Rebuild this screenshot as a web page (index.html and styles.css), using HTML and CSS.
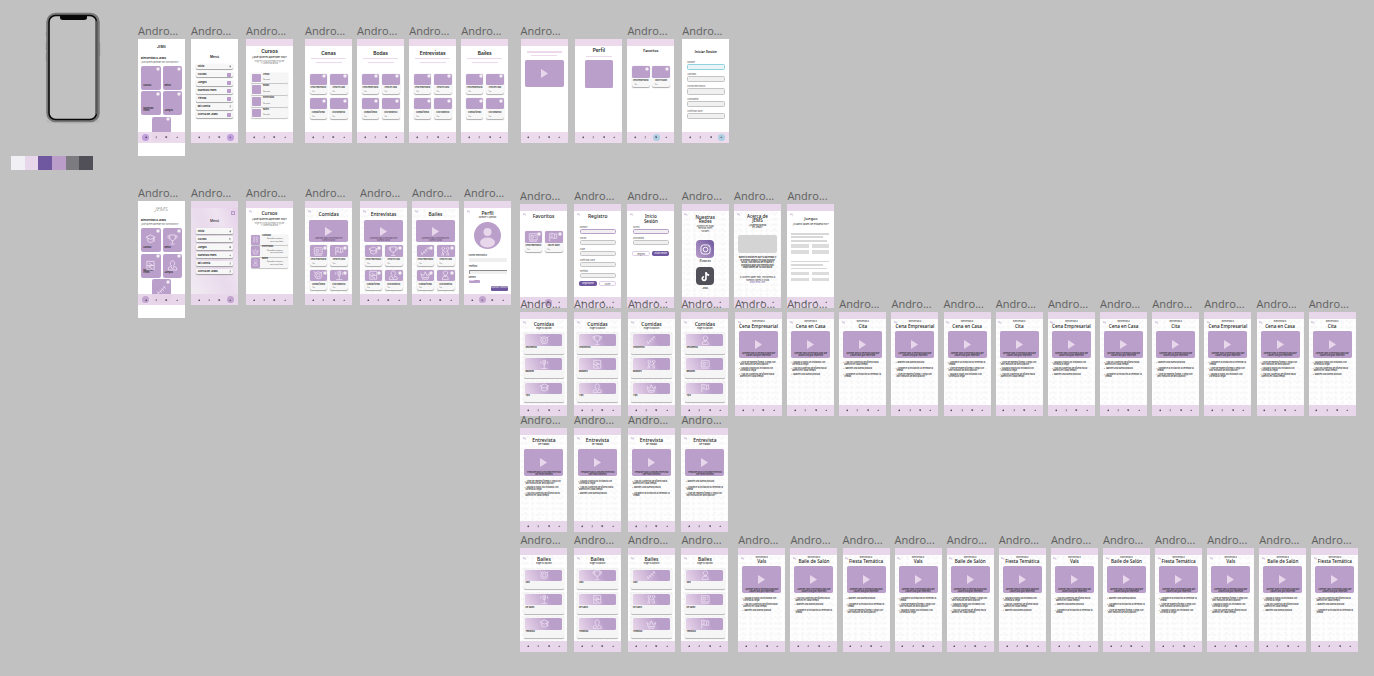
FILE: index.html
```html
<!DOCTYPE html>
<html lang="es">
<head>
<meta charset="utf-8">
<title>JEMS</title>
<link rel="stylesheet" href="styles.css">
</head>
<body>
<svg class="defs" aria-hidden="true">
  <symbol id="home" viewBox="0 0 12 12"><path d="M1 6 6 1l5 5H9.500v5h-7V6z"/></symbol>
  <symbol id="user" viewBox="0 0 12 12"><circle cx="6" cy="3.500" r="2.500"/><path d="M1.500 11c0-5 9-5 9 0z"/></symbol>
  <symbol id="heart" viewBox="0 0 12 12"><path d="M6 11 1 5.500C0 2 4 0 6 3c2-3 6-1 5 2.500z"/></symbol>
  <symbol id="more" viewBox="0 0 12 12"><path d="M1 5h10v2H1zM5 2h2v8H5z"/></symbol>
  <symbol id="play" viewBox="0 0 7 9"><path d="M0 0 7 4.500 0 9z"/></symbol>
  <symbol id="back" viewBox="0 0 12 12"><path d="M5 1 1 4l4 3M1 4h6c5 0 5 6 1 7" fill="none" stroke="currentColor" stroke-width="1.500"/></symbol>
</svg>
<main class="canvas" id="canvas">
  <svg class="phone" viewBox="0 0 60 120">
    <ellipse cx="30" cy="109" rx="27" ry="3" fill="#aaa" opacity=".4"/>
    <rect x="4.500" y="2" width="51" height="107" rx="8" fill="#c1c1c1" stroke="#77777a" stroke-width="2.500"/>
    <rect x="6" y="3.500" width="47.500" height="104" rx="6.500" fill="none" stroke="#080808" stroke-width="1.600"/>
    <path d="M53.300 9v93" stroke="#555" stroke-width="1.600"/>
    <path d="M17 3.500h27v2q0 2.500-3 2.500H20q-3 0-3-2.500z" fill="#080808"/>
    <path d="M3.300 20v4M3.300 30v8M3.300 41v8M56.700 31v13" stroke="#777" stroke-width=".6"/>
  </svg>
  <div class="palette"><i class="p1"></i><i class="p2"></i><i class="p3"></i><i class="p4"></i><i class="p5"></i><i class="p6"></i></div>
</main>
<script src="app.js"></script>
</body>
</html>
```
FILE: styles.css
```css
* { box-sizing: border-box; }
body { margin: 0; background: #c1c1c1; font-family: Inter, "Open Sans", sans-serif; color: #222; }
.defs { position: absolute; width: 0; height: 0; }
.canvas { position: relative; width: 1374px; height: 676px; overflow: hidden; }
.phone { position: absolute; left: 43px; top: 12px; width: 60px; height: 120px; }
.palette { position: absolute; left: 11px; top: 156px; width: 82px; height: 14px; display: grid; grid-template-columns: repeat(6, 1fr); }
.p1 { background: #f1f1f5; } .p2 { background: #e8d6ea; } .p3 { background: #6f589f; }
.p4 { background: #bb9dca; } .p5 { background: #7c7b80; } .p6 { background: #514f57; }

.board { position: absolute; width: 47px; }
.name { position: absolute; left: 0; top: -16px; font: 11px/16px "Open Sans", sans-serif; color: #606060; white-space: nowrap; }
.sheet { height: 104px; background: #fff; }
.tall .sheet { height: 117px; }
.screen { position: relative; height: 104px; overflow: hidden; display: flex; flex-direction: column; align-items: center; --bar: #ecdaec; }
.v2 .screen { --bar: #e8d6ea; }
.textured .screen { background: radial-gradient(circle, #f8f8f9 1px, transparent 1.600px) 0 0 / 5px 6px, radial-gradient(circle, #f8f8f9 1px, transparent 2px) 2px 3px / 7px 5px, #fefefe; }
.soft .screen { background: linear-gradient(70deg, #f2edf3, #e9daec 50%, #efe3f1 70%, #e4cee8); }
.bar { flex: none; width: 100%; height: 7px; background: var(--bar); }
.bar.none { background: none; }
.nav { position: absolute; left: 0; right: 0; bottom: 0; height: 11px; padding: 0 2.800px; display: grid; grid-template-columns: repeat(4, 1fr); place-items: center; background: var(--bar); color: #55485e; opacity: .96; }
.nav span { width: 7px; height: 7px; border-radius: 50%; display: grid; place-items: center; }
.nav svg { width: 2.500px; height: 2.500px; fill: currentColor; }
.nav .on { background: #bd9bdc; }
.v2 .nav .on { background: #c0a2cd; }
.cyan .nav .on { background: #a9cde0; }
.back { position: absolute; left: 2.500px; top: 9px; width: 3.500px; height: 3.500px; color: #b493c6; }

.head { flex: none; width: 100%; display: flex; flex-direction: column; align-items: center; text-align: center; }
.title { font-size: 4.800px; line-height: 5px; font-weight: 600; white-space: nowrap; }
.v2 .title { font-family: "Noto Sans", sans-serif; font-weight: 500; font-size: 4.900px; }
.v2 .title.two { line-height: 4.300px; font-size: 4.500px; }
.title.small { font-size: 3.400px; }
.sub { font-size: 2.200px; line-height: 2.600px; font-weight: 500; white-space: nowrap; }
.quiet { font-size: 2px; line-height: 2.200px; color: #777; white-space: nowrap; }
.rule { width: 35px; height: 1.500px; background: #ecd9ec; margin-top: 2px; }
.rule.short { width: 26px; height: 1.200px; margin-top: 2.500px; }

.h-home { height: 27px; padding-top: 0; }
.h-home .title { font-size: 3.200px; line-height: 3px; }
.v2 .h-home .title { font-style: italic; font-weight: 300; color: #777; font-size: 6px; }
.h-home .sub { align-self: flex-start; margin: 7.500px 0 0 3px; font-size: 2.700px; line-height: 3.500px; font-weight: 700; }
.h-home .quiet { align-self: flex-start; margin: .8px 0 0 3px; color: #555; font-size: 1.900px; }
.tiles { flex: none; width: 40.500px; display: flex; flex-wrap: wrap; justify-content: center; gap: 1.300px 2px; margin-top: -7px; }
.tile { width: 19.200px; height: 24px; border-radius: 2px; background: #bb9fcb; position: relative; display: flex; align-items: flex-end; padding: 0 2px 3px; font-size: 2.300px; line-height: 2.300px; font-weight: 600; }
.tile .art { position: absolute; left: 4px; top: 6px; width: 11px; height: 11px; }
.dot { position: absolute; right: .8px; top: .8px; width: 4px; height: 4px; border-radius: 50%; background: #fff; border: .8px solid #d9cbdf; }
.art { fill: none; stroke: #efe3f3; stroke-width: 1.700; }

.h-menu { height: 17.500px; padding-top: 9px; }
.v2 .h-menu { height: 20px; padding-top: 11px; }
.h-menu .title, .v2 .h-menu .title { font-size: 3.300px; line-height: 4px; }
.menu { width: 36.500px; display: grid; gap: 2.100px; }
.menu div { height: 5.950px; border-radius: 1.300px; background: #f7f7f8; box-shadow: 0 .8px 1px #888; padding: 0 1.500px; display: flex; align-items: center; justify-content: space-between; font-size: 2.500px; font-weight: 700; white-space: nowrap; line-height: 3px; }
.menu i { width: 4px; height: 4px; background: #bb9fcb; }
.menu svg { width: 2.600px; height: 2.600px; fill: #888; }
.corner { position: absolute; right: 3.500px; top: 9.500px; width: 4px; height: 4px; border: 1px solid #b99bc9; background: #dfc9e4; }

.h-course { height: 26.500px; padding-top: 3px; }
.h-course .sub { margin-top: 2px; font-size: 2.600px; }
.h-course .quiet { margin-top: 1px; }
.courses { width: 36.500px; display: grid; gap: 1px; }
.course { height: 10.700px; border-radius: 1.500px; background: #f6f6f6; box-shadow: 0 .5px 1px #c4c4c4; display: flex; gap: 2px; padding: 1px; font-size: 2.100px; line-height: 2.600px; font-weight: 600; white-space: nowrap; }
.course .thumb { flex: none; width: 8.700px; height: 8.700px; border-radius: 1px; background: #bb9fcb; }
.v2 .course { padding: 0 1px 0 0; height: 10.500px; gap: 2px; }
.v2 .course .thumb { height: 10px; display: grid; place-items: center; }
.course .art { width: 7px; height: 7px; }
.course small { display: block; font-size: 1.800px; line-height: 2.200px; font-weight: 400; color: #555; }
.v2 .course small { padding-left: 5px; text-align: right; }

.h-cards { height: 27.500px; padding-top: 4.500px; }
.v2 .h-cards { height: 12px; padding-top: 3.500px; }
.h-fav { height: 20px; padding-top: 3px; }
.cards { width: 38px; display: grid; grid-template-columns: 17.700px 17.700px; justify-content: space-between; gap: 3.700px 0; }
.card { position: relative; height: 20.700px; border-radius: 2px; background: #f7f7f7; box-shadow: 0 .5px 1px #aaa; font-size: 1.850px; line-height: 2.400px; font-weight: 600; text-align: center; white-space: nowrap; }
.pic { height: 11.500px; margin-bottom: 1.300px; border-radius: 1.500px; background: #bb9fcb; display: grid; place-items: center; }
.pic .art { width: 10.500px; height: 10.500px; }
.card small { display: block; text-align: left; padding: 1.500px 0 0 2.500px; font-size: 1.800px; font-weight: 400; color: #777; }

.video { flex: none; position: relative; width: 39px; height: 27px; border-radius: 1.800px; background: #bb9fcb; display: grid; place-items: center; }
.video svg { width: 7px; height: 9px; fill: #e8d6ea; }
.video p { position: absolute; left: 1px; right: 1px; bottom: 1px; margin: 0; font-size: 1.950px; line-height: 2.100px; font-weight: 500; text-align: center; white-space: nowrap; }
.video.low { height: 22px; margin-bottom: 3px; }
.video.low p { color: #5f4b69; }
.h-video { height: 14px; padding-top: 3px; }
.h-perfil { height: 14px; padding-top: 2px; }
.square { width: 27.500px; height: 27.500px; border-radius: 1.500px; background: #bb9fcb; }

.h-form { height: 15px; padding-top: 3.500px; }
.h-sign { height: 15px; padding-top: 3px; }
.v2 .h-sign .two { line-height: 4.600px; }
.fields { width: 38px; display: grid; gap: 3px; }
.field { font-size: 2px; line-height: 3px; font-weight: 500; color: #666; padding-left: .5px; }
.field i { display: block; height: 6.200px; border: .6px solid #c4c4c4; border-radius: 1.500px; background: #f0f0f0; }
.field.first i { border: 1px solid #8fd3de; background: #eaf3f5; }
.v2 .field i { height: 5px; }
.v2 .fields { width: 37px; gap: 3px; }
.v2 .field.first i { border: .8px solid #bb9fcb; background: #f0f0f0; }
.actions { width: 37px; margin-top: 3px; display: flex; justify-content: space-between; }
.btn { width: 17.500px; height: 5px; border-radius: 1.800px; background: #6f589f; color: #fff; font-size: 2px; line-height: 5px; text-align: center; white-space: nowrap; }
.btn.line { background: #fff; color: #444; border: .5px solid #dccfe6; line-height: 4px; }
.login { margin-top: 6px; }

.h-me { height: 14px; padding-top: 3px; }
.h-me .sub { font-size: 2px; font-weight: 400; }
.avatar { flex: none; width: 27px; height: 27px; fill: #e8d6ea; }
.me { width: 38px; display: flex; flex-direction: column; font-size: 2.100px; line-height: 2.500px; font-weight: 500; padding-top: 5.500px; }
.me i { height: 4.200px; margin: .8px 0 4px; background: #efefef; }
.me i.live { border-top: 1px solid #888; border-left: 1px solid #999; margin-bottom: 3.500px; }
.chip { width: 11px; height: 3.300px; background: #bb9fcb; border-radius: .8px; color: #fff; }
.save { align-self: flex-end; width: 17px; height: 4.500px; margin: 3px -1.500px 0 0; background: #6f589f; border-radius: 1px; color: #ddd; line-height: 4.500px; text-align: center; }

.h-net { height: 29px; padding-top: 4px; }
.h-net .quiet { margin-top: 1.500px; color: #333; }
.app { width: 18px; height: 18px; border-radius: 4px; background: linear-gradient(45deg, #bb9fcb, #6f589f); display: grid; place-items: center; }
.app.dark { background: #514f57; }
.app svg { width: 11px; height: 11px; fill: none; stroke: #fff; stroke-width: 2; }
.handle { height: 9px; font-size: 2.100px; line-height: 8px; font-weight: 500; }

.h-about { height: 24px; padding-top: 3px; }
.h-about .sub { margin-top: 2px; }
.photo { flex: none; width: 39.500px; height: 18px; border-radius: 2px; background: #d4d4d4; }
.para { width: 38px; margin-top: 4px; font-size: 2.150px; line-height: 2.600px; font-weight: 600; text-align: center; }
.para.thin { margin-top: 7px; font-weight: 400; }
.link { color: #6f589f; }

.h-quiz { height: 22px; padding-top: 4.500px; }
.v2 .h-quiz .title { font-size: 4.200px; }
.h-quiz .sub { margin-top: 3px; font-weight: 400; font-size: 2.400px; }
.quiz { width: 39px; display: flex; flex-wrap: wrap; gap: 1.800px 3px; margin-bottom: 7px; }
.quiz i { height: 1.700px; background: #d8d8d8; width: 37.500px; }
.quiz .m { width: 31.500px; } .quiz .l { width: 36px; }
.quiz b { width: 17.500px; height: 3.200px; background: #dcdcdc; margin-top: 1px; }

.h-list { height: 14px; padding-top: 2.500px; }
.h-list .sub { line-height: 3px; }
.list { display: grid; gap: 3.700px; }
.item { width: 40.300px; height: 20.600px; padding: 1px 1.700px; border-radius: 1.300px; background: #f5f5f5; box-shadow: 0 .6px 1px #b4b4b4; font-size: 2.100px; line-height: 2.500px; font-weight: 600; }
.item .pic { background: linear-gradient(65deg, #e6d3e9 5%, #bb9fcb 65%); }

.h-detail { height: 11.500px; padding-top: 1.300px; }
.h-detail .quiet { color: #444; font-weight: 500; line-height: 2.500px; }
.v2 .h-detail .title { font-size: 4.650px; line-height: 6px; }
.steps { align-self: stretch; margin: 4.500px 3px 0 5px; padding: 0; list-style: none; font-size: 2.100px; line-height: 2.400px; font-weight: 500; display: grid; gap: 1px; }
.steps li { height: 5px; }
.steps li::before { content: "•"; margin: 0 1px 0 -1px; }
```
FILE: app.js
```javascript
const ART = [
  'M12 2 2 7l10 5 10-5zM6 9v7c4 3 8 3 12 0V9M20 8v9',
  'M6 2h12v7c0 7-12 7-12 0zM6 4H2c0 5 2 6 5 6M18 4h4c0 5-2 6-5 6M12 14v6M7 22h10',
  'M4 3h16v18H4zM8 7l8 4-8 4 8 4M4 12h16',
  'M12 2c6 0 6 9 2 11l7 4v5H3v-5l7-4C6 11 6 2 12 2zM9 15l3 5 3-5',
  'M3 21 20 3M8 12l5 5M12 8l5 5M6 20l-3-6M21 8l-5-5',
  'M7 3a3 3 0 1 0 1 0M17 3a3 3 0 1 0 1 0M4 22l3-12 5 5 5-5 3 12M8 22v-6M16 22v-6',
  'M2 8l4 13h12l4-13-6 5-4-9-4 9zM6 17h12',
  'M12 2a5 5 0 1 0 1 0M5 22c0-12 14-12 14 0zM9 12l3 4 3-4',
  'M3 4h18v14H3zM7 8h5v6H7zM15 8h3M15 12h3M3 21h18',
  'M4 3v18M4 4c6-4 10 4 16 0v10c-6 4-10-4-16 0M9 5v9M15 5v9',
  'M4 12a8 8 0 1 0 16 0 8 8 0 1 0-16 0M8 12a4 4 0 1 0 8 0 4 4 0 1 0-8 0M2 3l4 4M22 3l-4 4',
  'M9 2v8a3 3 0 0 0 6 0V2M12 2v20M5 22h14M4 5v6M20 5v6'
];
let artIndex = 0;
const art = () => `<svg class="art" viewBox="0 0 24 24"><path d="${ART[artIndex++ % ART.length]}"/></svg>`;
const icon = id => `<svg><use href="#${id}"/></svg>`;
const bar = '<div class="bar"></div>';
const noBar = '<div class="bar none"></div>';
const back = '<svg class="back"><use href="#back"/></svg>';
const nav = on => `<div class="nav">${['home', 'user', 'heart', 'more'].map((n, i) => `<span${i === on ? ' class="on"' : ''}>${icon(n)}</span>`).join('')}</div>`;
const head = (cls, html) => `<div class="head ${cls}">${html}</div>`;
const title = (t, c = '') => `<div class="title ${c}">${t}</div>`;
const sub = t => `<div class="sub">${t}</div>`;
const quiet = t => `<div class="quiet">${t}</div>`;
const video = (text = '', cls = '') => `<div class="video ${cls}">${icon('play')}${text && `<p>${text}</p>`}</div>`;

const home = v2 => noBar + head('h-home', title('JEMS') + sub('Bienvenido a JEMS') + quiet('¿Qué quieres aprender hoy con nosotros?')) +
  `<div class="tiles">${['Cursos', 'Retos', 'Nuestras<br>redes', 'Juegos', ''].map(t => `<div class="tile">${v2 ? art() : ''}<b class="dot"></b><span>${t}</span></div>`).join('')}</div>` + nav(0);

const menu = v2 => (v2 ? bar + '<b class="corner"></b>' : noBar) + head('h-menu', title('Menú')) +
  `<div class="menu">${(v2 ? ['Inicio', 'Cursos', 'Juegos', 'Nuestras redes', 'Mi Cuenta', 'Acerca de JEMS'] : ['Inicio', 'Cursos', 'Juegos', 'Nuestras redes', 'Tienda', 'Mi Cuenta', 'Acerca de JEMS'])
    .map((t, i) => `<div>${t}${v2 || i === 0 || i === 5 ? icon(['home', 'back', 'heart', 'more', 'user', 'user'][i]) : '<i></i>'}</div>`).join('')}</div>` + nav(3);

const courses = v2 => bar + (v2 ? back : '') + head('h-course', title('Cursos') + sub('¿Qué quieres aprender hoy?') + quiet('Elige el curso que más te guste<br>y comienza ahora')) +
  `<div class="courses">${(v2 ? ['Comidas', 'Entrevistas', 'Bailes'] : ['Cenas', 'Bodas', 'Entrevistas', 'Bailes']).map(t =>
    `<div class="course"><div class="thumb">${v2 ? art() : ''}</div><div>${t}${v2 ? '<small>Aprende a comer y<br>servir muy bien</small>' : '<small><br>Ver más</small>'}</div></div>`).join('')}</div>` + nav();

const card = (t, v2) => `<div class="card"><div class="pic">${v2 ? art() : ''}</div><b class="dot"></b>${t}<small>Ver</small></div>`;
const cards = (names, v2) => `<div class="cards">${names.map(n => card(n, v2)).join('')}</div>`;
const CARD_NAMES = ['Cena empresarial', 'Cena en Casa', 'Comida formal', 'Cita romántica'];
const category = (name, v2, navOn) => bar + (v2
  ? back + head('h-cards', title(name)) + video('Aprende todo lo necesario en<br>nuestro curso', 'low')
  : head('h-cards', title(name) + '<div class="rule"></div><div class="rule short"></div>')) + cards(CARD_NAMES, v2) + nav(navOn);
const favorites = v2 => bar + (v2 ? back : '') + head('h-fav', title('Favoritos', v2 ? '' : 'small')) + cards(['Cena empresarial', 'Vals en Salón'], v2) + nav(2);

const fields = names => `<div class="fields">${names.map((n, i) => `<div class="field${i ? '' : ' first'}">${n}<i></i></div>`).join('')}</div>`;
const form = () => noBar + head('h-form', title('Iniciar Sesión', 'small')) + fields(['Nombre', 'Apellidos', 'Correo electrónico', 'Contraseña', 'Confirmar clave']) + nav(3);
const register = () => bar + back + head('h-sign', title('Registro')) + fields(['Nombre', 'Correo', 'Clave', 'Confirmar clave', 'Teléfono']) +
  '<div class="actions"><div class="btn">Registrarme</div><div class="btn line">Volver</div></div>' + nav();
const login = () => bar + back + head('h-sign', title('Inicio<br>Sesión', 'two')) + fields(['Correo', 'Contraseña']) +
  '<div class="actions login"><div class="btn line">Registro</div><div class="btn">Iniciar sesión</div></div>' + nav();
const intro = () => bar + head('h-video', '<div class="rule"></div><div class="rule short"></div>') + video() + nav();
const profile = () => bar + head('h-perfil', title('Perfil') + '<div class="rule short"></div>') + '<div class="square"></div>' + nav();
const me = () => bar + back + head('h-me', title('Perfil') + sub('Nombre y Apellido')) +
  '<svg class="avatar" viewBox="0 0 27 27"><circle cx="13.500" cy="13.500" r="13.500" fill="#bb9fcb"/><circle cx="13.500" cy="10" r="4"/><ellipse cx="13.500" cy="20.500" rx="7.500" ry="5"/></svg>' +
  '<div class="me">Correo electrónico<i></i>Teléfono<i class="live"></i>Género<span class="chip">Editar</span><span class="save">Guardar cambios</span></div>' + nav(1);
const networks = () => bar + back + head('h-net', title('Nuestras<br>Redes', 'two') + quiet('Síguenos en todas<br>nuestras redes<br>sociales')) +
  '<div class="app"><svg viewBox="0 0 24 24"><rect x="2" y="2" width="20" height="20" rx="6"/><circle cx="12" cy="12" r="5"/><path d="M17 6h1.500"/></svg></div><div class="handle">@JEMS.mx</div>' +
  '<div class="app dark"><svg viewBox="0 0 24 24"><path stroke-width="3.500" d="M13 2v14.500a4 4 0 1 1-4-4M13 3c1 4 3 6 7 6"/></svg></div><div class="handle">JEMS</div>' + nav();
const about = () => bar + back + head('h-about', title('Acerca de<br>JEMS', 'two') + sub('¿Quiénes somos<br>en JEMS?')) +
  '<div class="photo"></div><div class="para">Nuestra misión es que tú aprendas y te sientas seguro en toda ocasión social, con cursos de etiqueta y protocolo para los eventos más importantes de tu vida diaria</div>' +
  '<div class="para thin">Si quieres saber más, escríbenos a nuestro correo o visita<br><span class="link">www.jems.com</span></div>' + nav();
const quizBlock = '<div class="quiz"><i></i><i class="m"></i><i class="l"></i><b></b><b></b><b></b><b></b></div>';
const quiz = () => bar + back + head('h-quiz', title('Juegos') + sub('¿Cuánto sabes de etiqueta hoy?')) + quizBlock + quizBlock + nav();
const list = (name, labels) => bar + back + head('h-list', title(name) + sub('Elige tu opción')) +
  `<div class="list">${labels.map(l => `<div class="item"><div class="pic">${art()}</div>${l}</div>`).join('')}</div>` + nav();
const STEPS = [
  'Viste de manera formal y llega con diez minutos de anticipación',
  'Saluda a todos los invitados con cortesía al llegar',
  'Usa los cubiertos de afuera hacia adentro en cada tiempo',
  'Mantén una buena postura',
  'Agradece la invitación al terminar la velada'
];
const steps = n => `<ul class="steps">${[0, 1, 2].map(i => `<li>${STEPS[(i + n) % STEPS.length]}</li>`).join('')}</ul>`;
const CAPTION = 'Aprende todo lo necesario para que<br>causes una gran impresión';
const detail = (name, n) => bar + back + head('h-detail', quiet('Bienvenido a') + title(name)) + video(CAPTION) + steps(n) + nav();
const interview = n => bar + back + head('h-list', title('Entrevista') + sub('de Trabajo')) + video('Prepárate para tu próxima entrevista<br>con estos consejos') + steps(n) + nav();

const canvas = document.getElementById('canvas');
function board(x, y, html, cls = '', named = true) {
  canvas.insertAdjacentHTML('beforeend',
    `<section class="board ${cls}" style="left:${x}px;top:${y}px">${named ? '<div class="name">Andro...</div>' : ''}<div class="sheet"><div class="screen">${html}</div></div></section>`);
}

board(138, 39, home(false), 'tall');
board(191, 39, menu(false));
board(246, 39, courses(false));
['Cenas', 'Bodas', 'Entrevistas', 'Bailes'].forEach((n, i) => board(305 + i * 52.1, 39, category(n, false)));
board(520.5, 39, intro());
board(575.3, 39, profile(), '', false);
board(627.4, 39, favorites(false), 'cyan');
board(682.3, 39, form(), 'cyan');

board(138, 201.400, home(true), 'v2 tall');
board(191, 201.400, menu(true), 'v2 soft');
board(246, 201.400, courses(true), 'v2');
board(305.2, 201.400, category('Comidas', true), 'v2 textured');
board(360, 201.400, category('Entrevistas', true), 'v2 textured');
board(412, 201.400, category('Bailes', true), 'v2 textured');
board(464, 201.400, me(), 'v2');

board(520, 204, favorites(true), 'v2');
board(574.2, 204, register(), 'v2');
board(627.4, 204, login(), 'v2');
board(681.7, 204, networks(), 'v2 textured');
board(734, 204, about(), 'v2 textured');
board(787.4, 204, quiz(), 'v2');

const COLS = [520.4, 574, 628, 681.4];
COLS.forEach(x => board(x, 312, list('Comidas', ['Vestimenta', 'Modales', 'Tips']), 'v2 textured'));
for (let i = 0; i < 12; i++) board(735 + i * 52.15, 312, detail(['Cena Empresarial', 'Cena en Casa', 'Cita'][i % 3], i), 'v2 textured');
COLS.forEach((x, i) => board(x, 428, interview(i), 'v2 textured'));
COLS.forEach(x => board(x, 547.700, list('Bailes', ['Vals', 'De Salón', 'Temática']), 'v2 textured'));
for (let i = 0; i < 12; i++) board(738.3 + i * 52.1, 547.700, detail(['Vals', 'Baile de Salón', 'Fiesta Temática'][i % 3], i + 1), 'v2 textured');
```
